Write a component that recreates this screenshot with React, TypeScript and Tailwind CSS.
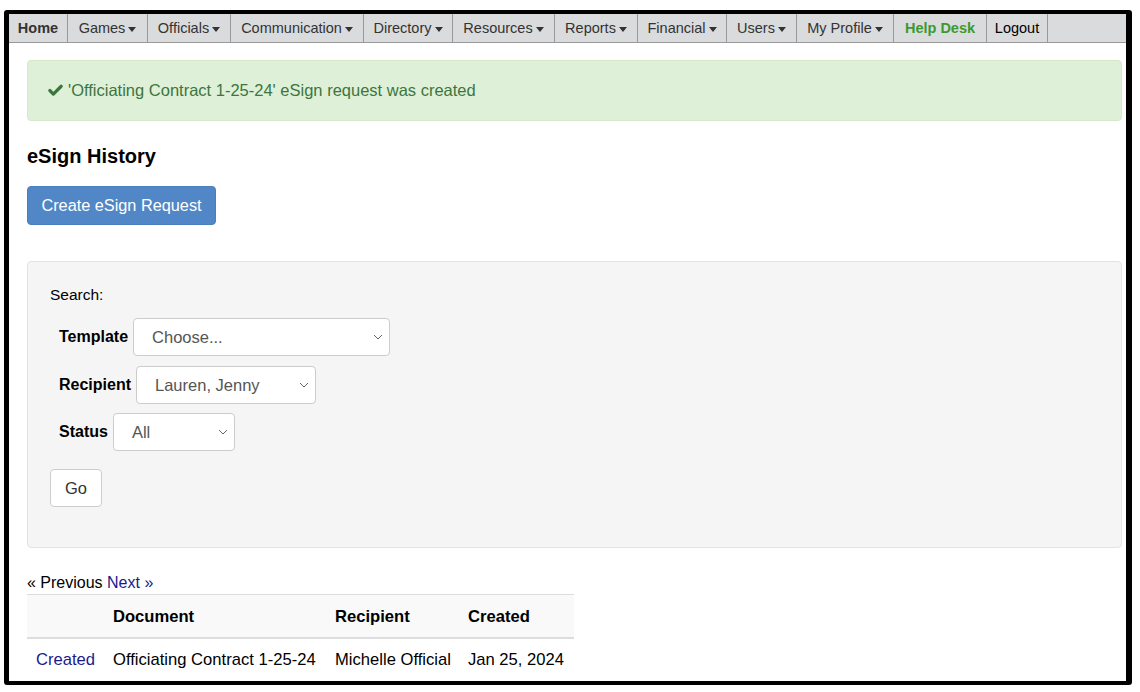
import { Check } from "lucide-react";

const navItems = [
  { label: "Home", w: "w-[59px]", bold: true },
  { label: "Games", w: "w-[80px]", caret: true },
  { label: "Officials", w: "w-[83px]", caret: true },
  { label: "Communication", w: "w-[133px]", caret: true },
  { label: "Directory", w: "w-[89px]", caret: true },
  { label: "Resources", w: "w-[102px]", caret: true },
  { label: "Reports", w: "w-[83px]", caret: true },
  { label: "Financial", w: "w-[89px]", caret: true },
  { label: "Users", w: "w-[70px]", caret: true },
  { label: "My Profile", w: "w-[97px]", caret: true },
  { label: "Help Desk", w: "w-[93px]", bold: true, green: true },
  { label: "Logout", w: "w-[61px]" },
];

function Caret() {
  return (
    <svg width="8" height="5" viewBox="0 0 8 5" className="ml-[3px] mt-[1px]" aria-hidden="true">
      <path d="M0 0 L8 0 L4 5 Z" fill="#333" />
    </svg>
  );
}

function Chevron() {
  return (
    <svg width="10" height="6" viewBox="0 0 10 6" aria-hidden="true" className="absolute right-[6px] top-1/2 -translate-y-1/2 pointer-events-none">
      <path d="M1 1 L5 5 L9 1" fill="none" stroke="#666" strokeWidth="1" />
    </svg>
  );
}

// select imitation
function SelectBox({ value, width }: { value: string; width: string }) {
  return (
    <div className={`relative h-[38px] ${width} bg-white border border-[#ccc] rounded-[4px] flex items-center pl-[18px] text-[16.5px] text-[#555]`}>
      {value}
      <Chevron />
    </div>
  );
}

export default function App() {
  return (
    <div className="w-[1140px] h-[692px] bg-white pt-[10px] pl-[4px] font-['Liberation_Sans',Arial,sans-serif] text-[#000]">
      <div className="w-[1128px] h-[675px] border-black border-l-[5px] border-t-[4px] border-r-[6px] border-b-[4px] rounded-[3px] overflow-hidden flex flex-col">
        {/* ナビゲーション */}
        <nav className="h-[29px] bg-[#dadbdc] border-b border-[#999] flex shrink-0">
          {navItems.map((item) => (
            <div
              key={item.label}
              className={`${item.w} flex items-center justify-center pt-[2px] border-r border-[#999] text-[14.5px] ${item.bold ? "font-bold" : ""} ${item.green ? "text-[#3a9a2f]" : item.label === "Logout" ? "text-black" : "text-[#333]"}`}
            >
              {item.label}
              {item.caret && <Caret />}
            </div>
          ))}
        </nav>

        <div className="pl-[18px] pr-[4px] pt-[17px]">
          {/* 完了メッセージ */}
          <div className="h-[61px] bg-[#dff0d8] border border-[#d6e9c6] rounded-[4px] flex items-center pl-[19px] text-[16.5px] text-[#3c763d]">
            <Check size={17} strokeWidth={4.5} className="mr-[4px]" />
            'Officiating Contract 1-25-24' eSign request was created
          </div>

          <h1 className="mt-[24px] text-[20px] font-bold leading-[22px]">eSign History</h1>

          <button
            type="button"
            className="mt-[19px] h-[39px] w-[189px] bg-[#5187c6] border border-[#4a7fbd] rounded-[4px] text-white text-[16.3px]"
          >
            Create eSign Request
          </button>

          {/* 検索フォーム */}
          <div className="mt-[36px] h-[287px] bg-[#f5f5f5] border border-[#e3e3e3] rounded-[4px] pl-[22px] pt-[23px]">
            <div className="text-[15.5px] leading-[20px]">Search:</div>
            <div className="mt-[13px] flex items-center gap-[5px] pl-[9px]">
              <span className="font-bold text-[16px]">Template</span>
              <SelectBox value="Choose..." width="w-[257px]" />
            </div>
            <div className="mt-[10px] flex items-center gap-[5px] pl-[9px]">
              <span className="font-bold text-[16px]">Recipient</span>
              <SelectBox value="Lauren, Jenny" width="w-[180px]" />
            </div>
            <div className="mt-[9px] flex items-center gap-[5px] pl-[9px]">
              <span className="font-bold text-[16px]">Status</span>
              <div className="relative h-[38px] w-[122px] bg-white border border-[#ccc] rounded-[4px] flex items-center pl-[18px] text-[16.5px] text-[#555]">
                All
                <Chevron />
              </div>
            </div>
            <button
              type="button"
              className="mt-[18px] h-[38px] w-[52px] bg-white border border-[#ccc] rounded-[4px] text-[16.5px] text-[#333]"
            >
              Go
            </button>
          </div>

          {/* ページ送り */}
          <div className="mt-[26px] text-[16px] leading-[17px]">
            « Previous <span className="text-[#1a1a8c]">Next »</span>
          </div>

          <table className="mt-[3px] w-[547px] text-[16.6px] border-collapse table-fixed">
            <thead>
              <tr className="bg-[#f9f9f9] border-t border-b-2 border-[#ddd] h-[43px]">
                <th className="w-[77px]" />
                <th className="w-[222px] text-left font-bold pl-[9px] pt-[3px]">Document</th>
                <th className="w-[133px] text-left font-bold pl-[9px] pt-[3px]">Recipient</th>
                <th className="text-left font-bold pl-[9px] pt-[3px]">Created</th>
              </tr>
            </thead>
            <tbody>
              <tr className="h-[43px]">
                <td className="pl-[9px] pt-[2px] text-[#1a1a8c]">Created</td>
                <td className="pl-[9px] pt-[2px]">Officiating Contract 1-25-24</td>
                <td className="pl-[9px] pt-[2px]">Michelle Official</td>
                <td className="pl-[9px] pt-[2px]">Jan 25, 2024</td>
              </tr>
            </tbody>
          </table>
        </div>
      </div>
    </div>
  );
}
